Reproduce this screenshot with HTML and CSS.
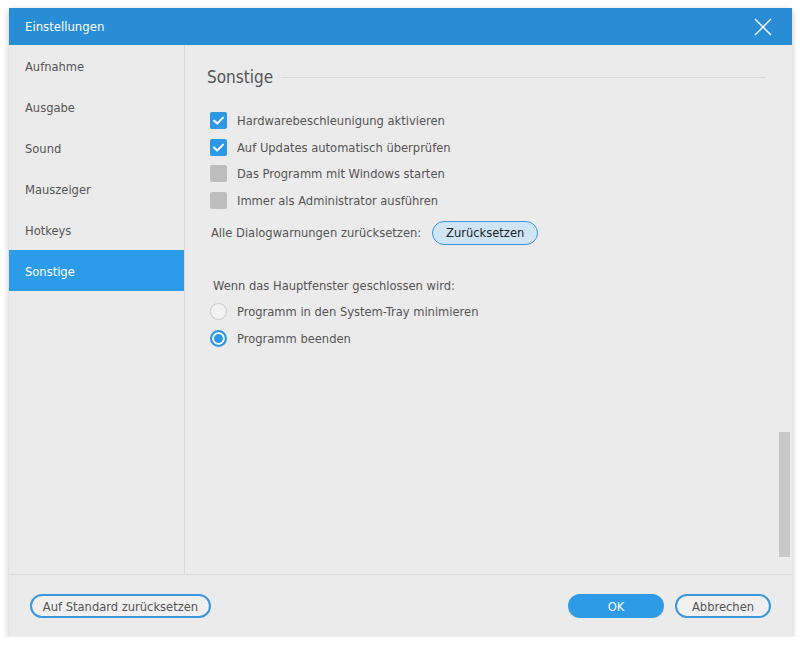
FILE: index.html
```html
<!DOCTYPE html>
<html lang="de">
<head>
<meta charset="utf-8">
<title>Einstellungen</title>
<link rel="stylesheet" href="styles.css">
</head>
<body>
<div class="window">
  <div class="titlebar">
    <span class="title">Einstellungen</span>
    <svg class="close" width="18" height="18" viewBox="0 0 18 18"><path d="M1 1L17 17M17 1L1 17" stroke="#fff" stroke-width="1.4" fill="none"/></svg>
  </div>
  <div class="main">
    <nav class="sidebar">
      <div class="nav-item">Aufnahme</div>
      <div class="nav-item">Ausgabe</div>
      <div class="nav-item">Sound</div>
      <div class="nav-item">Mauszeiger</div>
      <div class="nav-item">Hotkeys</div>
      <div class="nav-item active">Sonstige</div>
    </nav>
    <section class="content">
      <div class="panel">
        <div class="section-head"><h2>Sonstige</h2><span class="rule"></span></div>
        <div class="checks">
          <label class="check"><span class="box on"><svg width="17" height="17" viewBox="0 0 17 17"><path d="M4 8.6L7.2 11.6L13 5.6" stroke="#fff" stroke-width="2" fill="none" stroke-linecap="round" stroke-linejoin="round"/></svg></span>Hardwarebeschleunigung aktivieren</label>
          <label class="check"><span class="box on"><svg width="17" height="17" viewBox="0 0 17 17"><path d="M4 8.6L7.2 11.6L13 5.6" stroke="#fff" stroke-width="2" fill="none" stroke-linecap="round" stroke-linejoin="round"/></svg></span>Auf Updates automatisch überprüfen</label>
          <label class="check"><span class="box"></span>Das Programm mit Windows starten</label>
          <label class="check"><span class="box"></span>Immer als Administrator ausführen</label>
        </div>
        <div class="reset-row">
          <span>Alle Dialogwarnungen zurücksetzen:</span>
          <button class="btn-light">Zurücksetzen</button>
        </div>
        <div class="close-label">Wenn das Hauptfenster geschlossen wird:</div>
        <div class="radios">
          <label class="radio"><span class="circle"></span>Programm in den System-Tray minimieren</label>
          <label class="radio"><span class="circle on"></span>Programm beenden</label>
        </div>
      </div>
      <div class="scrolltrack"><div class="thumb"></div></div>
    </section>
  </div>
  <div class="footer">
    <button class="btn-outline wide">Auf Standard zurücksetzen</button>
    <div class="footer-right">
      <button class="btn-primary">OK</button>
      <button class="btn-outline">Abbrechen</button>
    </div>
  </div>
</div>
</body>
</html>
```
FILE: styles.css
```css
* { box-sizing: border-box; }
html, body { margin: 0; padding: 0; background: #ffffff; }
body {
  font-family: "DejaVu Sans Condensed", "DejaVu Sans", sans-serif;
  font-size: 12.8px;
  color: #555;
}
.window {
  margin: 8px 0 0 9px;
  width: 783px;
  height: 629px;
  background: #ebebeb;
  box-shadow: 0 2px 6px rgba(0,0,0,0.25);
  display: flex;
  flex-direction: column;
}
.titlebar {
  height: 37px;
  flex: none;
  background: #288dd4;
  color: #fff;
  display: flex;
  align-items: center;
  justify-content: space-between;
  padding: 0 20px 0 16px;
}
.title { font-size: 13px; }
.close { display: block; }
.main {
  flex: 1;
  display: flex;
  border-bottom: 1px solid #d8d8d8;
  min-height: 0;
}
.sidebar {
  width: 176px;
  flex: none;
  border-right: 1px solid #d9d9d9;
}
.nav-item {
  height: 41px;
  display: flex;
  align-items: center;
  padding-left: 16px;
  padding-top: 1px;
  color: #555;
}
.nav-item.active {
  background: #2d9ce8;
  color: #fff;
}
.content {
  flex: 1;
  display: flex;
}
.panel {
  flex: 1;
  padding: 20px 13px 0 22px;
}
.section-head {
  display: flex;
  align-items: center;
  gap: 8px;
}
.section-head h2 {
  margin: 0;
  font-weight: normal;
  font-size: 17px;
  color: #555;
  line-height: 24px;
}
.rule {
  flex: 1;
  height: 1px;
  background: #d9d9d9;
}
.checks {
  margin-top: 23px;
  display: flex;
  flex-direction: column;
  gap: 9.6px;
  padding-left: 3px;
}
.check, .radio {
  display: flex;
  align-items: center;
  gap: 10px;
  height: 17px;
}
.box {
  width: 17px;
  height: 17px;
  border-radius: 2px;
  background: #bdbdbd;
  flex: none;
}
.box.on { background: #2c98e6; }
.box svg { display: block; }
.reset-row {
  margin-top: 12px;
  display: flex;
  align-items: center;
  gap: 11px;
  padding-left: 4px;
}
.btn-light {
  font: inherit;
  color: #222;
  height: 24px;
  width: 106px;
  padding: 0;
  border-radius: 12px;
  border: 1px solid #3a95d8;
  background: #cfe5f5;
}
.close-label {
  margin-top: 33px;
  padding-left: 6px;
}
.radios {
  margin-top: 10px;
  display: flex;
  flex-direction: column;
  gap: 10px;
  padding-left: 3px;
}
.circle {
  width: 17px;
  height: 17px;
  border-radius: 50%;
  border: 1px solid #c6c6c6;
  background: #f2f2f2;
  flex: none;
}
.circle.on {
  border: 2px solid #2c98e6;
  background: #2c98e6;
  box-shadow: inset 0 0 0 2px #fff;
}
.scrolltrack {
  width: 13px;
  flex: none;
  padding-top: 387px;
  padding-right: 2px;
}
.thumb {
  width: 11px;
  height: 125px;
  background: #c8c8c8;
}
.footer {
  height: 62px;
  flex: none;
  display: flex;
  align-items: center;
  justify-content: space-between;
  padding: 0 21px 0 21px;
}
.footer-right { display: flex; gap: 11px; }
button { font-family: inherit; font-size: 12.8px; }
.btn-outline {
  height: 24px;
  width: 96px;
  border-radius: 12px;
  border: 2px solid #3a97dc;
  background: #f0f0f0;
  color: #555;
}
.btn-outline.wide { width: 181px; }
.btn-primary {
  height: 24px;
  width: 96px;
  border-radius: 12px;
  border: none;
  background: #2e9be6;
  color: #fff;
}
```
